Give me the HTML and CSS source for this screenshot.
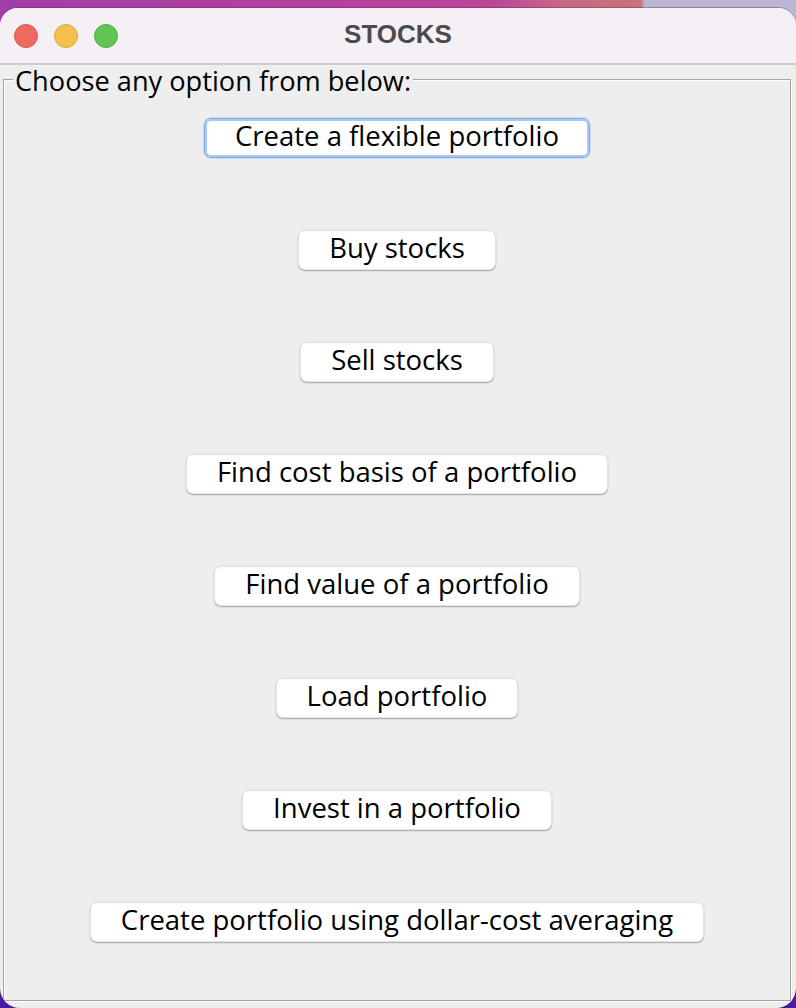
FILE: index.html
```html
<!DOCTYPE html>
<html lang="en">
<head>
<meta charset="utf-8">
<title>STOCKS</title>
<link rel="stylesheet" href="styles.css">
</head>
<body>
<div class="window">
  <header class="titlebar">
    <div class="lights">
      <span class="light red"></span>
      <span class="light yellow"></span>
      <span class="light green"></span>
    </div>
    <div class="title">STOCKS</div>
    <div></div>
  </header>
  <main class="content">
    <fieldset class="group">
      <legend class="group-title">Choose any option from below:</legend>
      <div class="options">
        <button class="btn focused">Create a flexible portfolio</button>
        <button class="btn">Buy stocks</button>
        <button class="btn">Sell stocks</button>
        <button class="btn">Find cost basis of a portfolio</button>
        <button class="btn">Find value of a portfolio</button>
        <button class="btn">Load portfolio</button>
        <button class="btn">Invest in a portfolio</button>
        <button class="btn">Create portfolio using dollar-cost averaging</button>
      </div>
    </fieldset>
  </main>
</div>
</body>
</html>
```
FILE: styles.css
```css
html, body {
  margin: 0;
  padding: 0;
}
body {
  width: 796px;
  height: 1008px;
  overflow: hidden;
  background:
    linear-gradient(to bottom, transparent 0, transparent 50%, #3e1a8f 50%, #4a1ba0 100%),
    linear-gradient(to right, #a13ea7 0%, #b4409e 40%, #bb4797 62%, #c7697f 71%, #c6727f 80.5%, #bbb6d2 81%, #bab6d3 100%);
  font-family: "Open Sans", "Noto Sans", sans-serif;
}
.window {
  margin-top: 8px;
  width: 796px;
  height: 1000px;
  border-radius: 18px 18px 20px 20px;
  overflow: hidden;
  display: flex;
  flex-direction: column;
  background: #eeeeee;
  box-shadow: 0 -1px 0 rgba(110, 20, 100, 0.35);
}
.titlebar {
  height: 55px;
  flex: none;
  background: #f5f0f6;
  border-bottom: 2px solid #cfcccf;
  display: grid;
  grid-template-columns: 1fr auto 1fr;
  align-items: center;
}
.lights {
  display: flex;
  gap: 16px;
  padding-left: 14px;
  padding-top: 1px;
}
.light {
  width: 22px;
  height: 22px;
  border-radius: 50%;
  border: 1px solid transparent;
}
.red { background: #ee6a5f; border-color: #d8584d; }
.yellow { background: #f6be4f; border-color: #dca33e; }
.green { background: #61c554; border-color: #50ab44; }
.title {
  font-family: "Liberation Sans", Arial, sans-serif;
  font-weight: bold;
  font-size: 26px;
  color: #4b4a4c;
  padding-bottom: 3px;
}
.content {
  flex: 1;
  display: flex;
  padding: 0 5px 7px 3px;
  min-height: 0;
}
.group {
  flex: 1;
  margin: 0;
  padding: 0;
  min-width: 0;
  border: 1px solid #a4a4a4;
  box-shadow: 1px 1px 0 #ffffff, inset 1px 1px 0 #ffffff;
}
.group-title {
  margin-left: 9px;
  padding: 4px 2px 0;
  line-height: 24px;
  font-size: 27.2px;
  color: #000000;
  background: #eeeeee;
}
.options {
  display: flex;
  flex-direction: column;
  align-items: center;
  gap: 72px;
  padding-top: 25px;
}
.btn {
  font-family: "Open Sans", "Noto Sans", sans-serif;
  font-size: 27.5px;
  color: #000000;
  height: 40px;
  line-height: 33px;
  padding: 0 30px 7px;
  background: #ffffff;
  border: 1px solid #e2e2e2;
  border-radius: 7px;
  box-shadow: 0 1px 1.5px rgba(0, 0, 0, 0.3);
  white-space: nowrap;
}
.btn.focused {
  border-color: #86aee9;
  box-shadow: inset 0 0 0 2px #a9c7f2, 0 0 0 0.5px #a9c7f2;
}
```
